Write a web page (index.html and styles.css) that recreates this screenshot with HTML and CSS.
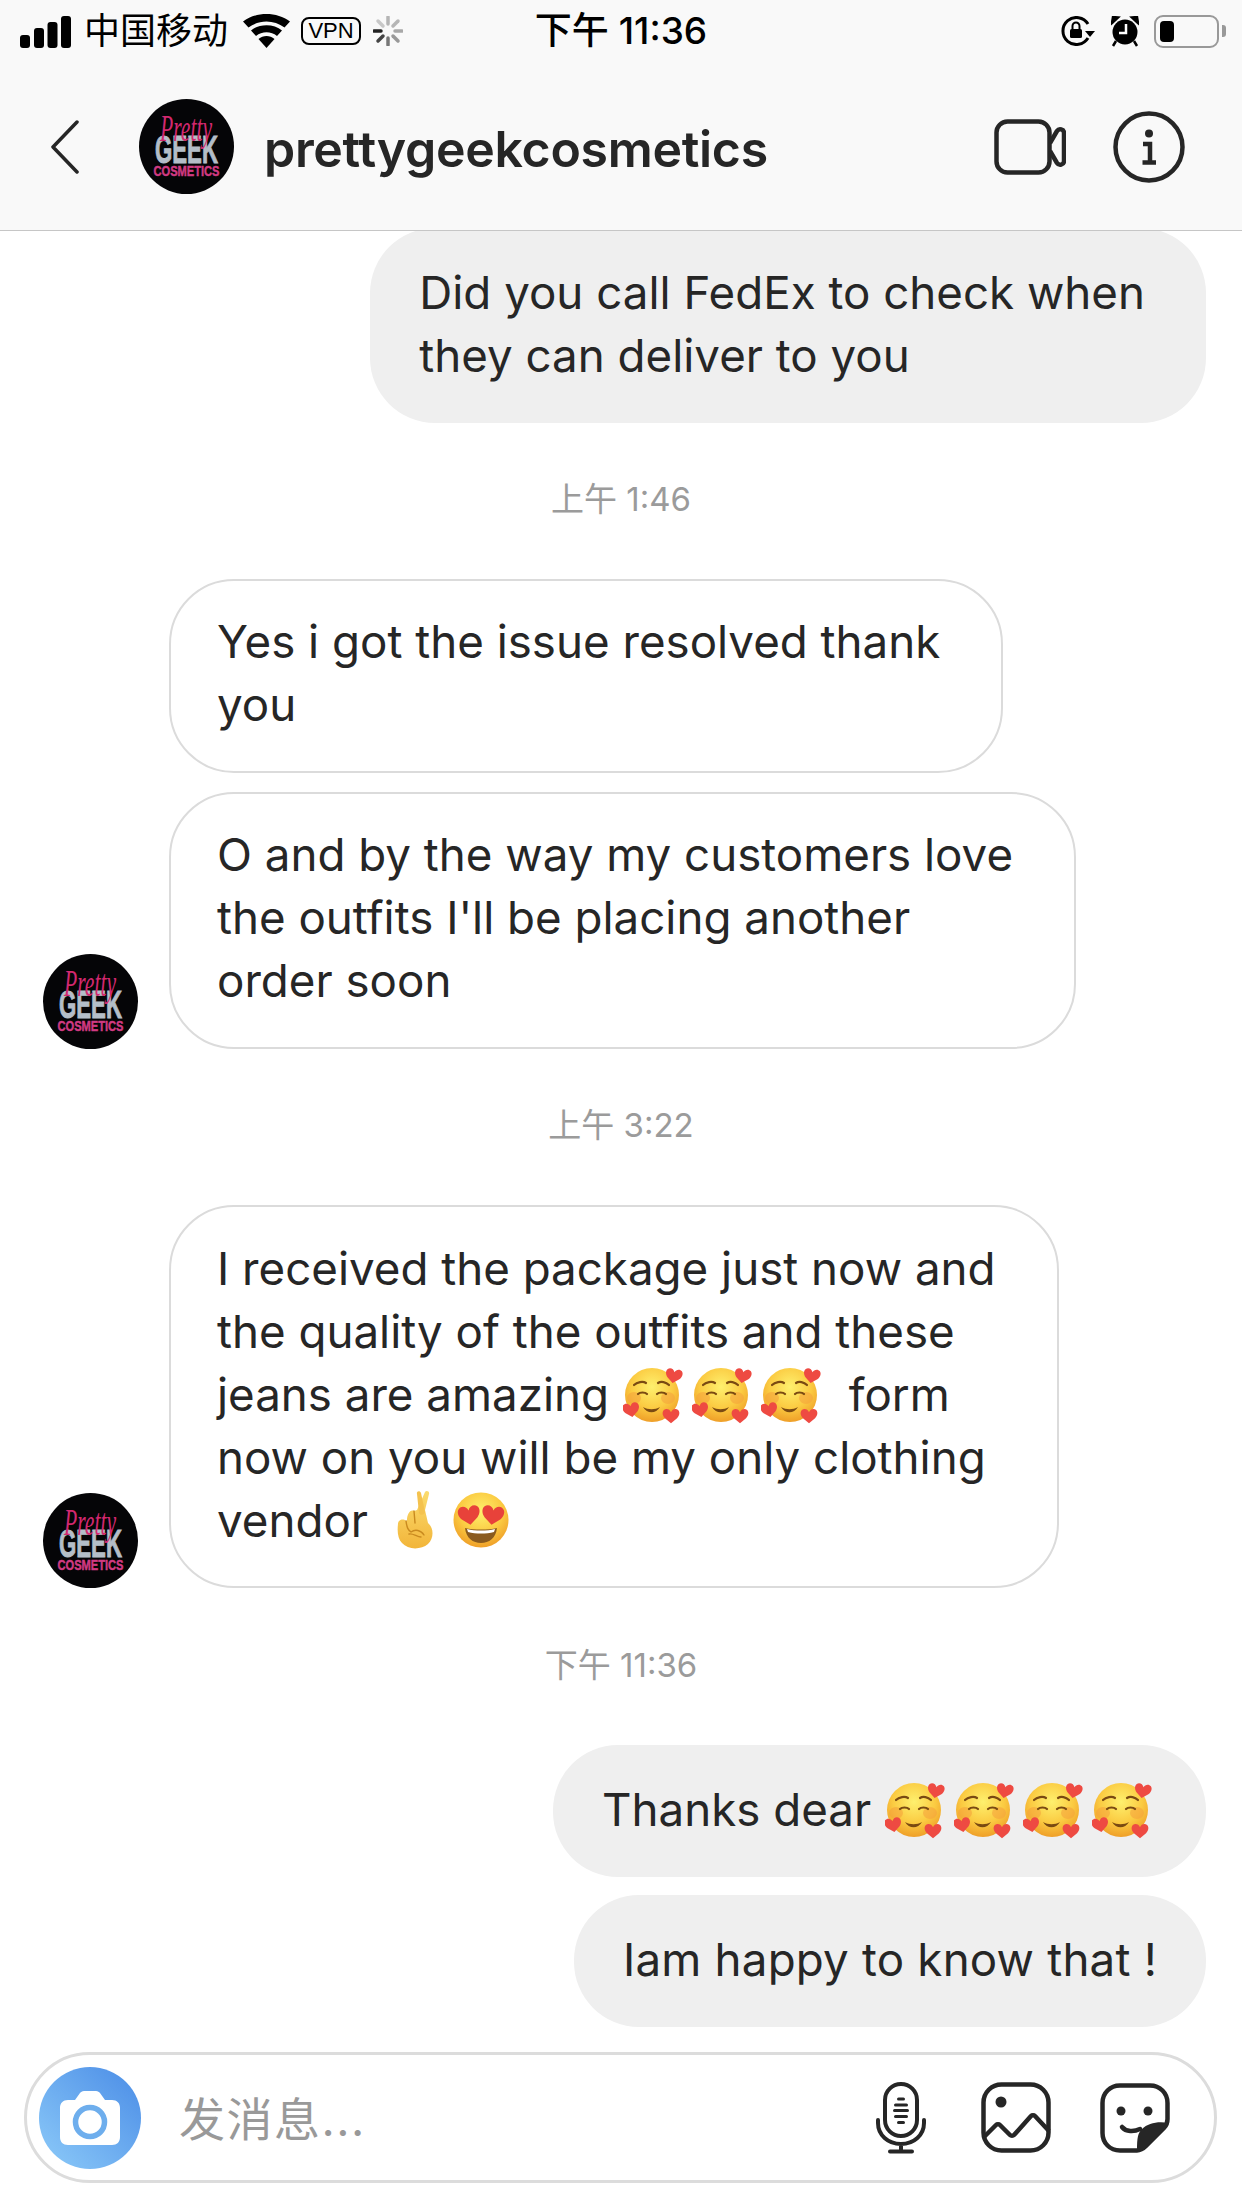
FILE: index.html
```html
<!DOCTYPE html>
<html lang="en">
<head>
  <meta charset="UTF-8" />
  <title>prettygeekcosmetics</title>
  <link rel="stylesheet" href="styles.css">
</head>
<body>
  <svg class="defs" width="0" height="0">
    <defs>
      <radialGradient id="faceFill" cx="50%" cy="35%" r="65%">
        <stop offset="0%" stop-color="#fef06e" />
        <stop offset="60%" stop-color="#fbcb42" />
        <stop offset="100%" stop-color="#ef9f28" />
      </radialGradient>
      <linearGradient id="handFill" x1="0" y1="0" x2="0" y2="1">
        <stop offset="0%" stop-color="#fbdc6e" />
        <stop offset="100%" stop-color="#f2b53a" />
      </linearGradient>
      <path id="heart" d="M0 -5C-2 -11 -9 -13 -13 -9C-17 -5 -15 2 -11 6L0 15L11 6C15 2 17 -5 13 -9C9 -13 2 -11 0 -5Z" />

      <symbol id="logo" viewBox="0 0 95 95">
        <circle cx="47.5" cy="47.5" r="47.5" fill="#050507" />
        <text class="logo-geek" x="47.5" y="64" text-anchor="middle" textLength="63" lengthAdjust="spacingAndGlyphs">GEEK</text>
        <text class="logo-script" x="47" y="42" text-anchor="middle" textLength="52" lengthAdjust="spacingAndGlyphs">Pretty</text>
        <text class="logo-sub" x="47.5" y="77" text-anchor="middle" textLength="66" lengthAdjust="spacingAndGlyphs">COSMETICS</text>
      </symbol>

      <symbol id="hearts-face" viewBox="0 0 60 57">
        <circle cx="29" cy="28" r="27" fill="url(#faceFill)" />
        <ellipse cx="11" cy="31" rx="7" ry="6" fill="#f4a03c" opacity=".55" />
        <ellipse cx="45" cy="31" rx="7" ry="6" fill="#f4a03c" opacity=".55" />
        <path d="M11 18C14 15 20 14 23 16M35 16C38 14 43 15 46 18" class="face-line" />
        <path d="M15 27C17 25 22 25 24 27M34 27C36 25 41 25 43 27" class="face-line" />
        <path d="M20 40C25 43 32 43 37 40C33 47 24 47 20 40Z" fill="#7a4a12" />
        <use href="#heart" transform="translate(51 8) rotate(10) scale(.55)" fill="#ee4a42" />
        <use href="#heart" transform="translate(8 42) rotate(-10) scale(.55)" fill="#ee4a42" />
        <use href="#heart" transform="translate(48 48) scale(.55)" fill="#ee4a42" />
      </symbol>

      <symbol id="heart-eyes" viewBox="0 0 56 56">
        <circle cx="28" cy="28" r="27.5" fill="url(#faceFill)" />
        <path d="M12 36C20 38 36 38 44 36C43 46 36 51 28 51C20 51 13 46 12 36Z" fill="#8a5a1e" />
        <path d="M14 37C22 39 34 39 42 37L41 40C33 42 23 42 15 40Z" fill="#fff" />
        <use href="#heart" transform="translate(16 22) rotate(-8) scale(.72)" fill="#e8423a" />
        <use href="#heart" transform="translate(40 22) rotate(8) scale(.72)" fill="#e8423a" />
      </symbol>

      <symbol id="crossed" viewBox="0 0 40 59">
        <path d="M22 20L30 2C31 0 35 1 34 4L30 20L33 33C39 38 39 48 33 54C26 60 13 60 7 53C3 49 2 42 3 34C3 30 8 28 11 31L12 30C12 25 15 19 19 21Z" fill="url(#handFill)" />
        <path d="M22 4C21 1 25 0 26 3L30 22C30 25 25 26 24 23Z" fill="#f4c24e" />
        <path d="M11 31C12 38 13 40 16 42C20 39 26 40 29 45M19 21L20 33M14 44C18 43 22 47 26 47" fill="none" stroke="#c98a1f" stroke-width="1.4" stroke-linecap="round" />
      </symbol>
    </defs>
  </svg>

  <div class="phone">
    <header class="top">
      <div class="statusbar">
        <div class="status-left">
          <svg width="51" height="32" viewBox="0 0 51 32">
            <rect x="0" y="19" width="10" height="13" rx="3" />
            <rect x="14" y="12" width="10" height="20" rx="3" />
            <rect x="27.500" y="6" width="10" height="26" rx="3" />
            <rect x="41" y="0" width="10" height="32" rx="3" />
          </svg>
          <span class="carrier">中国移动</span>
          <svg class="wifi" width="47" height="34" viewBox="0 0 47 34">
            <path d="M23.500 34L15.500 25C20 21 27 21 31.500 25Z" />
            <path d="M13 22L8 16.500C16 9.500 31 9.500 39 16.500L34 22C28 17 19 17 13 22Z" />
            <path d="M5.500 13.500L0 7.500C13 -2.500 34 -2.500 47 7.500L41.500 13.500C31 5.500 16 5.500 5.500 13.500Z" />
          </svg>
          <span class="vpn">VPN</span>
          <svg class="spinner" width="30" height="30" viewBox="-15 -15 30 30">
            <line x1="0" y1="-14" x2="0" y2="-7" stroke="#b5b5b5" />
            <line x1="10" y1="-10" x2="5" y2="-5" stroke="#b5b5b5" />
            <line x1="14" y1="0" x2="7" y2="0" stroke="#a8a8a8" />
            <line x1="10" y1="10" x2="5" y2="5" stroke="#999" />
            <line x1="0" y1="14" x2="0" y2="7" stroke="#777" />
            <line x1="-10" y1="10" x2="-5" y2="5" stroke="#444" />
            <line x1="-14" y1="0" x2="-7" y2="0" stroke="#222" />
            <line x1="-10" y1="-10" x2="-5" y2="-5" stroke="#c8c8c8" />
          </svg>
        </div>
        <div class="status-time">下午 11:36</div>
        <div class="status-right">
          <svg width="34" height="30" viewBox="0 0 34 30">
            <path d="M27 22A13.500 13.500 0 1 1 27 8" fill="none" stroke="#000" stroke-width="3" />
            <path d="M24 15H34L29 21Z" />
            <rect x="9" y="13" width="12" height="9" rx="1.500" />
            <path d="M11.500 13V10A3.500 3.500 0 0 1 18.500 10V13" fill="none" stroke="#000" stroke-width="2" />
          </svg>
          <svg class="alarm" width="28" height="31" viewBox="0 0 28 31">
            <circle cx="14" cy="16" r="12.500" />
            <path d="M1 7L7 1.500L2 1ZM27 7L21 1.500L26 1ZM5 25L2 30M23 25L26 30" stroke="#000" stroke-width="2.500" />
            <path d="M15 8V17H8" fill="none" stroke="#fff" stroke-width="2.500" />
          </svg>
          <div class="battery"><div class="battery-fill"></div></div>
          <div class="battery-nub"></div>
        </div>
      </div>

      <nav class="navbar">
        <svg class="back" width="30" height="54" viewBox="0 0 30 54">
          <path d="M27 2L3 27L27 52" fill="none" stroke="#262626" stroke-width="3.500" stroke-linecap="round" stroke-linejoin="round" />
        </svg>
        <svg class="avatar avatar-nav"><use href="#logo" /></svg>
        <h1 class="title">prettygeekcosmetics</h1>
        <svg class="video" width="72" height="56" viewBox="0 0 72 56">
          <rect x="2.500" y="2.500" width="53" height="51" rx="11" fill="none" stroke="#262626" stroke-width="4.500" />
          <path d="M56 24L63 12C65 9 70 10 70 14V42C70 46 65 47 63 44L56 32" fill="none" stroke="#262626" stroke-width="4.500" stroke-linejoin="round" />
        </svg>
        <svg class="info" width="72" height="72" viewBox="0 0 72 72">
          <circle cx="36" cy="36" r="33.500" fill="none" stroke="#262626" stroke-width="4.500" />
          <circle cx="36" cy="22.500" r="4" fill="#262626" />
          <path d="M30 33H37V51M29.500 51.500H43" fill="none" stroke="#262626" stroke-width="4.500" />
        </svg>
      </nav>
    </header>

    <main class="thread">
      <div class="msg sent clipped">
        <div class="bubble multi">Did you call FedEx to check when<br>they can deliver to you</div>
      </div>

      <div class="stamp">上午 1:46</div>

      <div class="msg received">
        <div class="avatar-slot"></div>
        <div class="bubble multi">Yes i got the issue resolved thank<br>you</div>
      </div>
      <div class="msg received">
        <svg class="avatar"><use href="#logo" /></svg>
        <div class="bubble multi">O and by the way my customers love<br>the outfits I'll be placing another<br>order soon</div>
      </div>

      <div class="stamp">上午 3:22</div>

      <div class="msg received">
        <svg class="avatar"><use href="#logo" /></svg>
        <div class="bubble multi">I received the package just now and<br>the quality of the outfits and these<br>jeans are amazing <svg class="emoji first"><use href="#hearts-face" /></svg><svg class="emoji"><use href="#hearts-face" /></svg><svg class="emoji"><use href="#hearts-face" /></svg><span class="after-emoji">form</span><br>now on you will be my only clothing<br>vendor <svg class="emoji-fingers"><use href="#crossed" /></svg><svg class="emoji-eyes"><use href="#heart-eyes" /></svg></div>
      </div>

      <div class="stamp">下午 11:36</div>

      <div class="msg sent">
        <div class="bubble with-emoji">Thanks dear <svg class="emoji first"><use href="#hearts-face" /></svg><svg class="emoji"><use href="#hearts-face" /></svg><svg class="emoji"><use href="#hearts-face" /></svg><svg class="emoji"><use href="#hearts-face" /></svg></div>
      </div>
      <div class="msg sent">
        <div class="bubble single">Iam happy to know that !</div>
      </div>
    </main>

    <footer class="composer">
      <div class="camera">
        <svg width="60" height="54" viewBox="0 0 60 54">
          <path d="M8 9H15L20 2C21 1 22 0 24 0H36C38 0 39 1 40 2L45 9H52C57 9 60 12 60 17V46C60 51 57 54 52 54H8C3 54 0 51 0 46V17C0 12 3 9 8 9Z" fill="#fff" />
          <circle cx="30" cy="31" r="14.500" fill="none" stroke="#6eaeed" stroke-width="5.500" />
        </svg>
      </div>
      <div class="placeholder">发消息...</div>
      <div class="composer-icons">
        <svg class="mic" width="52" height="72" viewBox="0 0 52 72">
          <rect x="10" y="2" width="32" height="52" rx="16" fill="none" stroke="#262626" stroke-width="4" />
          <path d="M23.500 17H28.500M20.500 23H31.500M19.500 28.500H32.500M20.500 34.500H31.500M23.500 40.500H28.500" stroke="#262626" stroke-width="3" stroke-linecap="round" />
          <path d="M3 38V41C3 53 13 62 26 62C39 62 49 53 49 41V38M26 62V69M15 69.500H37" fill="none" stroke="#262626" stroke-width="4" stroke-linecap="round" />
        </svg>
        <svg width="70" height="71" viewBox="0 0 70 71">
          <rect x="2.500" y="2.500" width="65" height="66" rx="18" fill="none" stroke="#262626" stroke-width="4.500" />
          <circle cx="20" cy="20" r="5.500" fill="#262626" />
          <path d="M3 55L15 43C16 42 18 42 19 43L29 53C30 54 32 54 33 53L50 34C51 33 53 33 54 34L68 49" fill="none" stroke="#262626" stroke-width="4.500" stroke-linejoin="round" />
        </svg>
        <svg width="70" height="70" viewBox="0 0 70 70">
          <path d="M20 2.500H50C60 2.500 67.500 10 67.500 20V36C67.500 40 66 43 64 45L46 63C43 66 41 67.500 37 67.500H20C10 67.500 2.500 60 2.500 50V20C2.500 10 10 2.500 20 2.500Z" fill="none" stroke="#262626" stroke-width="4.500" />
          <circle cx="21" cy="28" r="4.500" fill="#262626" />
          <circle cx="48" cy="28" r="4.500" fill="#262626" />
          <path d="M22 44C26 49 34 49 40 46" fill="none" stroke="#262626" stroke-width="4.500" stroke-linecap="round" />
          <path d="M69 40C58 38 48 40 42 46C38 50 37 54 37 68C41 68 44 67 47 64L65 45C67 43 68 42 69 40Z" fill="#262626" />
        </svg>
      </div>
    </footer>
  </div>
</body>
</html>
```

FILE: styles.css
```css
* {
  margin: 0;
  padding: 0;
  box-sizing: border-box;
}

body {
  width: 1242px;
  height: 2208px;
  overflow: hidden;
  background: #fff;
  font-family: Inter, "Noto Sans CJK SC", sans-serif;
  color: #262626;
}

.defs {
  position: absolute;
}

.phone {
  width: 1242px;
  height: 2208px;
  display: flex;
  flex-direction: column;
}

/* top bars */
.top {
  height: 231px;
  flex: none;
  background: #f9f9f9;
  border-bottom: 1px solid #c6c6c6;
  position: relative;
  z-index: 1;
}

.statusbar {
  height: 60px;
  padding: 14px 20px 0;
  display: grid;
  grid-template-columns: 1fr auto 1fr;
  align-items: start;
  color: #000;
}

.status-left,
.status-right {
  display: flex;
  align-items: center;
  height: 34px;
}

.status-left svg:first-child {
  margin-top: 2px;
}

.carrier {
  margin-left: 13px;
  font-size: 36px;
  line-height: 34px;
}

.wifi {
  margin-left: 15px;
}

.vpn {
  margin-left: 11px;
  width: 60px;
  height: 28px;
  border: 2.5px solid #000;
  border-radius: 8px;
  font-family: "Liberation Sans", sans-serif;
  font-size: 22px;
  line-height: 23px;
  text-align: center;
}

.spinner {
  margin-left: 12px;
  stroke-width: 3.5;
  stroke-linecap: round;
}

.status-time {
  font-size: 37px;
  line-height: 34px;
  font-weight: 500;
}

.status-right {
  justify-content: flex-end;
  margin-right: -4px;
}

.alarm {
  margin-left: 16px;
}

.battery {
  margin-left: 15px;
  width: 65px;
  height: 33px;
  padding: 4px;
  border: 2.5px solid #999;
  border-radius: 9px;
}

.battery-fill {
  width: 14px;
  height: 100%;
  background: #000;
  border-radius: 4px;
}

.battery-nub {
  margin-left: 3px;
  width: 4px;
  height: 12px;
  background: #999;
  border-radius: 0 3px 3px 0;
}

.navbar {
  height: 170px;
  padding: 3px 0 0 50px;
  display: flex;
  align-items: center;
}

.avatar {
  width: 95px;
  height: 95px;
  flex: none;
}

.avatar-nav {
  margin-left: 59px;
}

.title {
  margin-left: 30px;
  margin-top: 4px;
  font-size: 50px;
  font-weight: 600;
  letter-spacing: -0.3px;
}

.video {
  margin-left: auto;
}

.info {
  margin-left: 47px;
  margin-right: 57px;
}

/* messages */
.thread {
  flex: 1;
  overflow: hidden;
  padding: 0 36px;
  display: flex;
  flex-direction: column;
}

.msg {
  flex: none;
  display: flex;
  align-items: flex-end;
  gap: 31px;
  margin-bottom: 18px;
}

.msg.received {
  padding-left: 7px;
  margin-bottom: 19px;
}

.msg.sent {
  justify-content: flex-end;
}

.msg.clipped {
  margin-top: -3px;
}

.avatar-slot {
  width: 95px;
  flex: none;
}

.bubble {
  padding: 33px 49px 36px;
  border-radius: 65px;
  font-size: 45.7px;
  line-height: 63px;
  white-space: nowrap;
}

.bubble.multi {
  padding-right: 61px;
}

.bubble.with-emoji {
  padding-right: 54px;
}

.bubble.single {
  letter-spacing: 0.2px;
}

.sent .bubble {
  background: #efefef;
}

.received .bubble {
  background: #fff;
  border: 2.5px solid #dbdbdb;
  padding-top: 29.5px;
  padding-bottom: 34.5px;
  padding-left: 46px;
}

.stamp {
  flex: none;
  height: 137.5px;
  padding-bottom: 26px;
  display: flex;
  align-items: center;
  justify-content: center;
  font-size: 33px;
  color: #9b9b9b;
}

/* emoji */
.emoji {
  width: 60px;
  height: 57px;
  margin-left: 9px;
  vertical-align: -13px;
}

.emoji.first {
  margin-left: 1px;
}

.after-emoji {
  margin-left: 28px;
}

.emoji-fingers {
  width: 40px;
  height: 59px;
  margin-left: 14px;
  vertical-align: -12px;
}

.emoji-eyes {
  width: 56px;
  height: 56px;
  margin-left: 18px;
  vertical-align: -11px;
}

/* logo */
.logo-script {
  font-family: "Liberation Serif", serif;
  font-style: italic;
  font-size: 38px;
  fill: #d2286f;
}

.logo-geek {
  font-family: "Liberation Sans", sans-serif;
  font-weight: 700;
  font-size: 39px;
  fill: #b4bec8;
  stroke: #b4bec8;
  stroke-width: 1;
}

.logo-sub {
  font-family: "Liberation Sans", sans-serif;
  font-weight: 700;
  font-size: 15.5px;
  fill: #d13a82;
  stroke: #d13a82;
  stroke-width: .5;
}

.face-line {
  fill: none;
  stroke: #7a4a12;
  stroke-width: 2.2;
  stroke-linecap: round;
}

/* composer */
.composer {
  flex: none;
  height: 131px;
  margin: 0 25px 25px 24px;
  padding-left: 12px;
  background: #fff;
  border: 3px solid #dcdcdc;
  border-radius: 66px;
  display: flex;
  align-items: center;
}

.camera {
  width: 102px;
  height: 102px;
  flex: none;
  border-radius: 50%;
  background: linear-gradient(225deg, #4a8ce6, #8dcbf9);
  display: flex;
  align-items: center;
  justify-content: center;
}

.placeholder {
  margin-left: 38px;
  padding-bottom: 4px;
  font-size: 46px;
  letter-spacing: 1.5px;
  color: #999;
}

.composer-icons {
  margin-left: auto;
  margin-right: 44px;
  display: flex;
  align-items: center;
  gap: 49px;
}

.mic {
  margin-right: 5px;
}
```
